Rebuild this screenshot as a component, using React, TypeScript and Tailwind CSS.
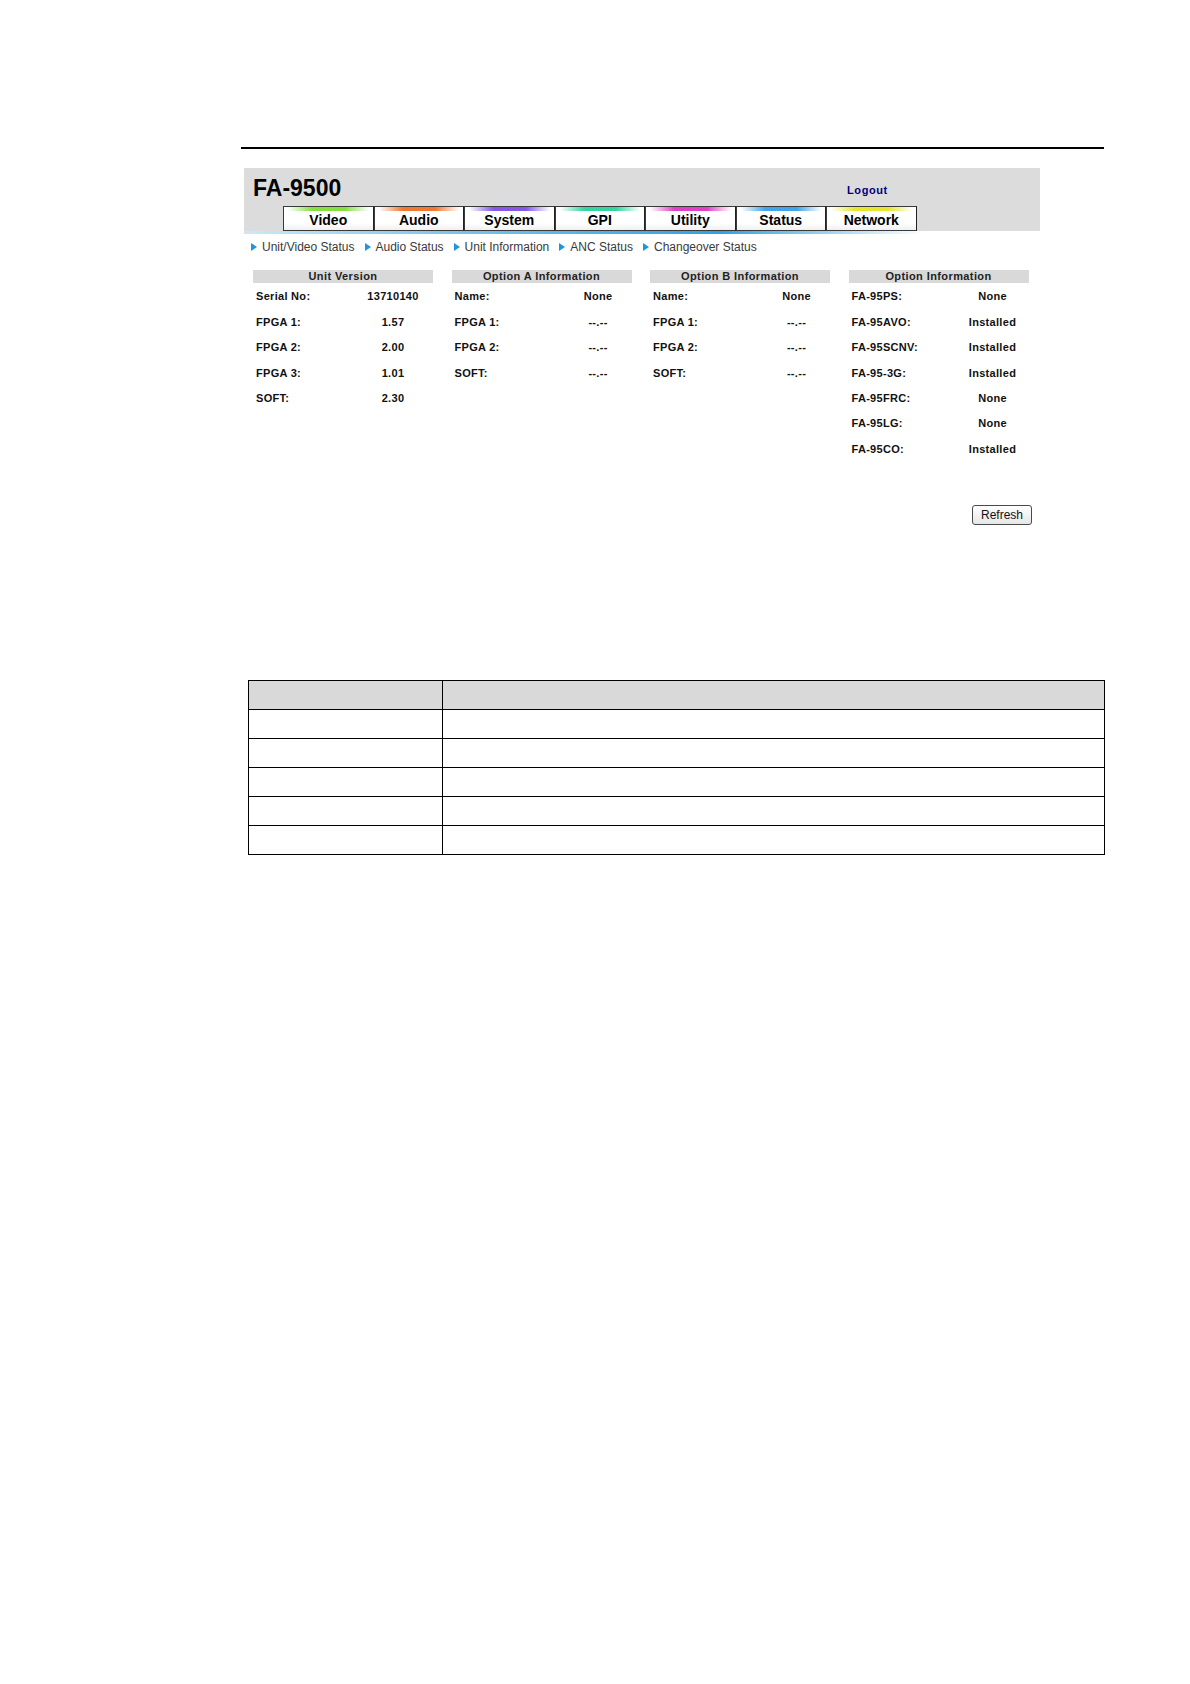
// FA-9500 web UI — Status / Unit Information page
const TABS = [
  { label: 'Video', bar: 'bg-[linear-gradient(to_right,transparent,#86e040_30%,#86e040_70%,transparent)]' },
  { label: 'Audio', bar: 'bg-[linear-gradient(to_right,transparent,#f07830_30%,#f07830_70%,transparent)]' },
  { label: 'System', bar: 'bg-[linear-gradient(to_right,transparent,#8658e8_30%,#8658e8_70%,transparent)]' },
  { label: 'GPI', bar: 'bg-[linear-gradient(to_right,transparent,#34d6a0_30%,#34d6a0_70%,transparent)]' },
  { label: 'Utility', bar: 'bg-[linear-gradient(to_right,transparent,#e040c6_30%,#e040c6_70%,transparent)]' },
  { label: 'Status', bar: 'bg-[linear-gradient(to_right,transparent,#40a6ea_30%,#40a6ea_70%,transparent)]' },
  { label: 'Network', bar: 'bg-[linear-gradient(to_right,transparent,#e4e630_30%,#e4e630_70%,transparent)]' },
];

const SUBNAV = ['Unit/Video Status', 'Audio Status', 'Unit Information', 'ANC Status', 'Changeover Status'];

type Section = { title: string; labelW: string; rows: [string, string][] };

const SECTIONS: Section[] = [
  {
    title: 'Unit Version',
    labelW: 'w-[100px]',
    rows: [
      ['Serial No:', '13710140'],
      ['FPGA 1:', '1.57'],
      ['FPGA 2:', '2.00'],
      ['FPGA 3:', '1.01'],
      ['SOFT:', '2.30'],
    ],
  },
  {
    title: 'Option A Information',
    labelW: 'w-[113px]',
    rows: [
      ['Name:', 'None'],
      ['FPGA 1:', '--.--'],
      ['FPGA 2:', '--.--'],
      ['SOFT:', '--.--'],
    ],
  },
  {
    title: 'Option B Information',
    labelW: 'w-[113px]',
    rows: [
      ['Name:', 'None'],
      ['FPGA 1:', '--.--'],
      ['FPGA 2:', '--.--'],
      ['SOFT:', '--.--'],
    ],
  },
  {
    title: 'Option Information',
    labelW: 'w-[108px]',
    rows: [
      ['FA-95PS:', 'None'],
      ['FA-95AVO:', 'Installed'],
      ['FA-95SCNV:', 'Installed'],
      ['FA-95-3G:', 'Installed'],
      ['FA-95FRC:', 'None'],
      ['FA-95LG:', 'None'],
      ['FA-95CO:', 'Installed'],
    ],
  },
];

function InfoBlock({ s }: { s: Section }) {
  return (
    <div className="w-[180px]">
      <div className="h-[13px] bg-[#d9d9d9] text-center text-[11px] leading-[13px] font-bold tracking-[0.4px] text-[#222]">
        {s.title}
      </div>
      <div className="mt-[1px]">
        {s.rows.map(([k, v]) => (
          <div key={k} className="flex h-[25.4px] items-center text-[11px] font-bold tracking-[0.3px] text-[#111]">
            <div className={`${s.labelW} pl-[3px]`}>{k}</div>
            <div className="flex-1 text-center">{v}</div>
          </div>
        ))}
      </div>
    </div>
  );
}

export default function App() {
  return (
    <div className="w-[1190px] min-h-[1684px] bg-white font-['Liberation_Sans',Arial,sans-serif] text-black">
      <div className="pt-[147px] pl-[241px]">
        <div className="w-[863px] h-[2px] bg-black" />
      </div>

      <div className="ml-[244px] mt-[19px] w-[796px]">
        {/* header panel */}
        <div className="h-[63px] bg-[#dcdcdc] flex flex-col">
          <div className="h-[38px] flex items-start pt-[9px] pl-[9px]">
            <div className="w-[594px] text-[23px] leading-[23px] font-bold">FA-9500</div>
            <a className="mt-[7px] text-[11px] leading-[13px] font-bold tracking-[0.6px] text-[#000080]">Logout</a>
          </div>
          <div className="flex pl-[39px]">
            {TABS.map((t) => (
              <div
                key={t.label}
                className="w-[90.5px] h-[25px] flex flex-col border border-[#3a3a3a] border-r-[#222] bg-[linear-gradient(to_bottom,#ffffff,#ffffff_70%,#f0f0f0)]"
              >
                <div className={`h-[4px] mx-[4px] ${t.bar}`} />
                <div className="flex-1 flex items-center justify-center text-[14px] leading-[14px] font-bold pb-[2px]">
                  {t.label}
                </div>
              </div>
            ))}
          </div>
        </div>
        <div className="h-[3px] w-[680px] bg-[linear-gradient(to_right,#cde9f7,#7cc4ee_30%,#2ea2e2_70%,transparent)]" />

        {/* sub navigation */}
        <div className="flex items-center gap-[10px] pl-[7px] mt-[5px] h-[16px]">
          {SUBNAV.map((s) => (
            <div key={s} className="flex items-center gap-[5px]">
              <span className="w-0 h-0 border-y-[4px] border-y-transparent border-l-[6px] border-l-[#1f95dc]" />
              <span className="text-[12px] leading-[16px] text-[#3a3a3a]">{s}</span>
            </div>
          ))}
        </div>

        {/* information blocks */}
        <div className="flex items-start gap-[18.5px] pl-[9px] mt-[15px]">
          {SECTIONS.map((s) => (
            <InfoBlock key={s.title} s={s} />
          ))}
        </div>

        <div className="flex justify-end pr-[8px] mt-[43px]">
          <button className="w-[60px] h-[20px] rounded-[3px] border border-[#4a4a4a] bg-[linear-gradient(to_bottom,#ffffff,#e6e6e6)] text-[12px] leading-[18px] text-[#111]">
            Refresh
          </button>
        </div>
      </div>

      {/* lower blank table */}
      <div className="ml-[248px] mt-[155px]">
        <table className="w-[857px] border-collapse">
          <tbody>
            <tr className="h-[29px] bg-[#d9d9d9]">
              <td className="w-[194px] border border-black" />
              <td className="border border-black" />
            </tr>
            {[0, 1, 2, 3, 4].map((i) => (
              <tr key={i} className="h-[29px]">
                <td className="w-[194px] border border-black" />
                <td className="border border-black" />
              </tr>
            ))}
          </tbody>
        </table>
      </div>
    </div>
  );
}
